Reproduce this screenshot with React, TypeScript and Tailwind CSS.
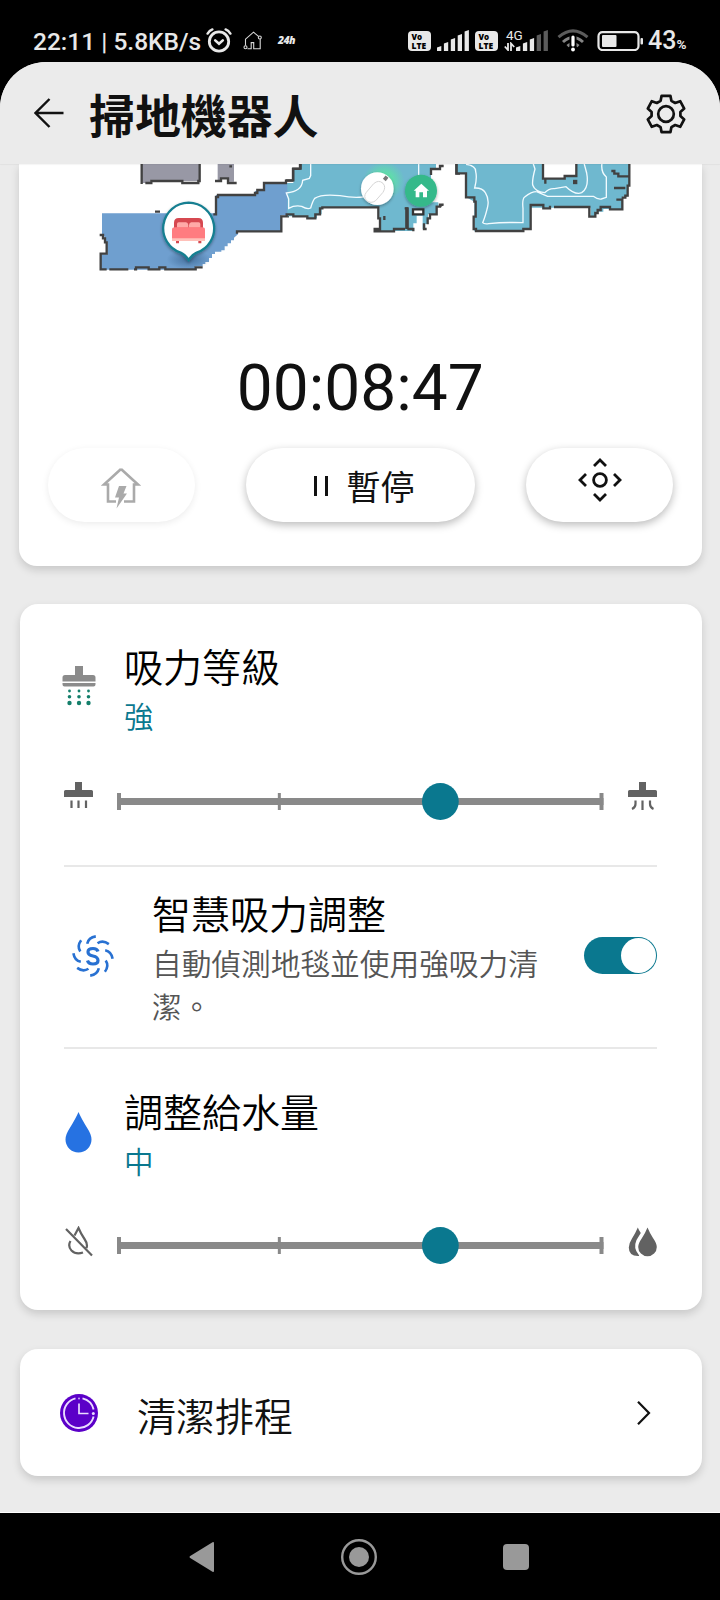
import type { ReactNode } from "react";

const cjk = "font-['Noto_Sans_CJK_TC',sans-serif]";

function VoLte() {
  return (
    <div className="flex h-5 w-[23px] flex-col items-start rounded-[4px] bg-[#e8e8e8] pl-[3.5px] font-['Open_Sans',sans-serif] text-[8px] font-extrabold leading-[9px] text-black">
      <span className="mt-px h-[9px]">Vo</span>
      <span className="h-[9px] text-[8.5px]">LTE</span>
    </div>
  );
}

function Signal({ active }: { active: number }) {
  const heights = [5, 9, 13, 17, 21];
  return (
    <svg className="h-[21px] w-[32px]" viewBox="0 0 32 21">
      {heights.map((h, i) => (
        <path
          key={h}
          d={`M${i * 6.9} 21v-${h - 1.5}l4.300-1.500v${h}z`}
          fill={i < active ? "#e8e8e8" : "#5c5c5c"}
        />
      ))}
    </svg>
  );
}

function StatusBar() {
  return (
    <header className="flex h-[62px] shrink-0 items-center bg-black pl-[33px] pt-[19px] text-[#e8e8e8]">
      <span className="w-[169px] whitespace-nowrap pt-[2px] font-[Roboto,sans-serif] text-[24.5px] font-medium leading-[28px]">
        22:11 | 5.8KB/s
      </span>
      <svg className="ml-[3px] h-[25px] w-[28px]" viewBox="0 0 28 25" fill="none" stroke="#e8e8e8" strokeLinecap="round">
        <circle cx="14" cy="13.5" r="9.7" strokeWidth="2.8" />
        <path d="M2.6 5.6Q4.4 2.6 7.4 1.4M25.4 5.6Q23.6 2.6 20.6 1.4" strokeWidth="2.4" />
        <path d="M10.2 12.4l3.8 3.4 3.8-3.4" strokeWidth="2.6" />
      </svg>
      <svg className="ml-[10px] h-[20px] w-[20px]" viewBox="0 0 20 20" fill="none" stroke="#d8d8d8" strokeWidth="1.1">
        <path d="M2.5 14.5V8.2L10.5 1.2l5 4.2M17.2 8v9.8h-6.5v-6.2H8.2v6.2H4.5" />
        <circle cx="16.8" cy="6.5" r="1.5" />
        <circle cx="2.5" cy="16.3" r="1.5" />
      </svg>
      <span className="ml-[15px] w-[20px] font-['Open_Sans',sans-serif] text-[10.5px] font-extrabold italic leading-none tracking-[-0.6px]">
        24h
      </span>
      <div className="ml-[110px]">
        <VoLte />
      </div>
      <div className="ml-[6px]">
        <Signal active={5} />
      </div>
      <div className="ml-[6px]">
        <VoLte />
      </div>
      <div className="ml-[6px] flex w-[45px] items-end">
        <div className="-mr-[15px] -mt-[3px] flex w-[27px] flex-col">
          <span className="ml-[2px] font-[Roboto,sans-serif] text-[13.5px] leading-[14px]">4G</span>
          <svg className="h-[9px] w-[11px]" viewBox="0 0 11 9" fill="none" stroke="#e8e8e8" strokeWidth="1.8">
            <path d="M.8 4.5L4 8V1M10.2 5L7 1.5V9" />
          </svg>
        </div>
        <Signal active={3} />
      </div>
      <svg className="ml-[8px] h-[23px] w-[32px]" viewBox="0 0 32 23" fill="none">
        <g stroke="#5c5c5c" strokeWidth="3">
          <path d="M1.5 8.2Q16-4.5 30.5 8.2" />
          <path d="M6 13Q16 4 26 13" stroke="#858585" />
          <path d="M10.5 17.2Q16 12 21.5 17.2" stroke="#858585" />
        </g>
        <path d="M12.5 6h7v17h-7z" fill="#000" />
        <path d="M16 8v8" stroke="#fff" strokeWidth="3.2" strokeLinecap="round" />
        <circle cx="16" cy="20.5" r="1.9" fill="#fff" />
      </svg>
      <svg className="ml-[8px] h-5 w-[47px]" viewBox="0 0 47 20">
        <rect x="1.5" y="1.2" width="40" height="17.8" rx="4" fill="none" stroke="#e8e8e8" strokeWidth="2.2" />
        <rect x="5" y="4" width="14.5" height="12" rx="1" fill="#e8e8e8" />
        <rect x="43.5" y="7" width="2.5" height="6.5" rx="1" fill="#e8e8e8" />
      </svg>
      <div className="ml-[4px] flex items-baseline whitespace-nowrap pt-[4px] font-[Roboto,sans-serif] font-medium leading-[28px]">
        <span className="text-[25px]">43</span>
        <span className="text-[13.5px] font-bold">%</span>
      </div>
    </header>
  );
}

function TopBar() {
  return (
    <div className="relative z-10 flex h-[102px] shrink-0 items-center rounded-t-[46px] bg-[#ebebeb] pl-[34px] pr-[34px] shadow-[0_1px_1px_rgba(0,0,0,0.04)]">
      <svg className="h-[30px] w-[30px]" viewBox="0 0 30 30" fill="none" stroke="#111" strokeWidth="2.4">
        <path d="M15.5 1L1.5 15l14 14M1.5 15h28" />
      </svg>
      <h1 className={`ml-[25px] text-[46px] font-bold leading-[60px] tracking-[-0.1px] text-[#111] ${cjk}`}>
        掃地機器人
      </h1>
      <svg className="ml-auto mt-px h-[40px] w-[40px]" viewBox="0 0 40 40" fill="none" stroke="#111" strokeWidth="2.7" strokeLinejoin="round">
        <path d="M15.6 1.8h8.8l1 5 3.8 2.2 5-1.8 4 7.4-3.8 3.4v4l3.8 3.4-4 7.4-5-1.8-3.8 2.2-1 5h-8.8l-1-5-3.8-2.2-5 1.8-4-7.4 3.8-3.4v-4l-3.8-3.4 4-7.4 5 1.8 3.8-2.2z" />
        <circle cx="20" cy="20" r="7.8" />
      </svg>
    </div>
  );
}

function FloorMap() {
  return (
    <svg className="block h-[180px] w-[684px]" viewBox="19 164 684 180" fill="none">
      <defs>
        <radialGradient id="glow">
          <stop offset="0.4" stopColor="#5fe0a8" stopOpacity="0.9" />
          <stop offset="1" stopColor="#5fe0a8" stopOpacity="0" />
        </radialGradient>
        <radialGradient id="shade">
          <stop offset="0.2" stopColor="#1c4670" stopOpacity="0.4" />
          <stop offset="1" stopColor="#1c4670" stopOpacity="0" />
        </radialGradient>
        <filter id="drop" x="-30%" y="-30%" width="160%" height="160%">
          <feDropShadow dx="0" dy="4" stdDeviation="4" floodOpacity="0.35" />
        </filter>
      </defs>

      <g transform="translate(80 155) scale(0.33333)">
        <path d="M185 24h174v54h-52v-3h-96v9h-26z" fill="#9898a5" />
        <path d="M413 24h49v56h-17v-10h-22v8h-10z" fill="#9898a5" />
        <path d="M66 175H408V120H525V108L552 103V84H624V181H604V230H474V238L462 248V256H453V265H443V274H434V286H424V290H405V297H396V309H387V321H376V327H368V334H345V344H61V298H82V262L73 258V243H66z" fill="#6f9fcf" />
        <g stroke="#414141" strokeWidth="7">
          <path d="M185 24V87M196 84H214V78H307V84H355V78H359V24M405 78H423V70H444V84H470M448 34H456" />
          <path d="M225 170H240M400 178H408V126H414V120H525V114H532V105H552V84H618V77H639V42H660V24" />
          <path d="M59 240H69V250H75V262H80V296H62V343H80M88 343H145M162 343H168V337H206V343H238V337H256V343H347V337H368M471 236V229H604V184H627" />
        </g>
      </g>

      <g transform="translate(270 155) scale(0.33333)">
        <path d="M92 24H498V42H483V142H505V155H498V178H474V207H466V222H458V182H440V205H430V228H315V222H328V157H155V178H141V190H112V184H52V84H70V45H92z" fill="#6fb8cf" />
        <ellipse cx="342" cy="77" rx="62" ry="58" fill="url(#glow)" />
        <path d="M122 24V62L118 70 98 76Q96 110 49 114L56 132V160Q74 150 95 154Q112 164 122 159Q128 138 134 130Q155 116 210 122Q250 130 280 126M446 24V66" stroke="#f2fbff" strokeWidth="4" />
        <g stroke="#414141" strokeWidth="7">
          <path d="M92 24V41H70V76H47M50 184V178H70V184H112V190H136V178H150V160H157V157H325V190H330V222H314V229H372V222H405M430 229V222H412M404 160H414M521 33H510V42H483V60M521 149H510V155H500V178H480V190H473V208M462 205V222H470" />
          <path d="M411 157V222" strokeWidth="11" />
          <path d="M343 183V195" />
          <path d="M429 163H460V178H429z" fill="#fff" stroke="#333" />
          <path d="M559 24V56H570" />
        </g>
        <g filter="url(#drop)">
          <circle cx="322" cy="101" r="49" fill="#fff" />
        </g>
        <path d="M289 112L311 86Q326 73 339 85Q349 96 339 112L317 137Q303 147 290 137Q279 125 289 112z" stroke="#d5d5d5" strokeWidth="3" />
        <path d="M343 75L351 65" stroke="#777" strokeWidth="11" />
        <g filter="url(#drop)">
          <circle cx="453" cy="107" r="48" fill="#35b98a" />
        </g>
        <path d="M431 107L454 86L477 107H471V127H459V112H448V127H437V107z" fill="#fff" />
      </g>

      <g transform="translate(440 155) scale(0.33333)">
        <path d="M50 24H568V92H562V125H548V162H490V170H466V186H452V158H272V222H250V229H103V184V140L78 126V55H50z" fill="#6fb8cf" />
        <path d="M309 24H409V66H374V71H309z" fill="#fff" />
        <g stroke="#f2fbff" strokeWidth="4">
          <path d="M78 28Q108 32 107 50Q112 68 104 99Q127 98 136 113Q148 132 143 155Q136 185 128 203Q132 208 146 206Q195 201 249 203V160Q246 132 254 126Q274 110 290 110" />
          <path d="M279 24L285 42Q276 75 278 90Q285 110 314 113Q328 99 344 101L378 95Q405 121 425 113Q448 98 440 54L432 24M290 110Q310 119 323 124L390 124L460 124Q473 134 484 132L499 127V66Q482 52 486 24" />
        </g>
        <g stroke="#414141" strokeWidth="7">
          <path d="M50 24V55H78V127H103V140H107V185H101V222H108V228H250V222H272V150H310V160H330V152M342 156H448V185H466V174H473V165H482V156H510V163H547V134H529M568 24V92H563V122H556V128H545M556 99H522M566 64H535V56H523V48H514M309 24V71H316V86M309 71H374V63H409V24" />
          <path d="M399 81H412" strokeWidth="13" />
        </g>
        <path d="M0 35L8 32M0 154L8 149" stroke="#414141" strokeWidth="6" />
      </g>

      <g transform="translate(80 155) scale(0.33333)">
        <ellipse cx="326" cy="313" rx="66" ry="30" fill="url(#shade)" />
        <g filter="url(#drop)">
          <path d="M326 143a77 77 0 0 1 24 150Q338 298 326 315Q314 298 302 293a77 77 0 0 1 24-150z" fill="#fff" stroke="#177f91" strokeWidth="7" />
        </g>
        <path d="M282 222V203Q282 189 296 189H355Q369 189 369 203V222z" fill="#d64850" />
        <path d="M291 218V207Q291 202 296 202H318Q324 202 325 210V218zM327 218V210Q328 202 334 202H356Q361 202 361 207V218z" fill="#ffaaa8" />
        <path d="M276 252V224Q276 217 285 217H367Q375 217 375 224V252z" fill="#ff7c80" />
        <path d="M276 250H375V258H276z" fill="#ffc1ba" />
        <path d="M288 258H297V265H288zM355 258H364V265H355z" fill="#d64850" />
      </g>
    </svg>
  );
}

function RobotCard() {
  return (
    <section className="ml-[18.5px] h-[402px] w-[683.5px] shrink-0 rounded-b-[18px] bg-white shadow-[0_4px_9px_rgba(0,0,0,0.15)]">
      <FloorMap />
      <div className="mt-[7px] h-[75px] text-center font-[Roboto,sans-serif] text-[64px] leading-[75px] text-[#111]">
        00:08:47
      </div>
      <div className="mt-[22px] flex pl-[29px]">
        <button className="flex h-[74px] w-[147px] items-center justify-center rounded-full bg-white pr-px pt-[5px] shadow-[0_2px_7px_rgba(0,0,0,0.08)]">
          <svg className="h-[42px] w-[40px]" viewBox="0 0 40 42">
            <path d="M20 2L3 17.5h4V34.5h8M20 2l17 15.5h-4V34.5H23" fill="none" stroke="#aaa" strokeWidth="2.6" />
            <path d="M18 19h7.5l-3 7.5h3.5L15.5 41.5l2.500-11h-4z" fill="#aaa" />
          </svg>
        </button>
        <button className={`ml-[51px] flex h-[74px] w-[229px] items-center rounded-full bg-white pl-[68px] text-[34px] text-[#111] shadow-[0_3px_8px_rgba(0,0,0,0.27)] ${cjk}`}>
          <svg className="mt-[2px] h-[20px] w-[14px]" viewBox="0 0 14 20" fill="none" stroke="#111" strokeWidth="3">
            <path d="M1.5 0v20M12.5 0v20" />
          </svg>
          <span className="ml-[19px] pt-[2px] leading-[50px]">暫停</span>
        </button>
        <button className="ml-[51px] flex h-[74px] w-[147px] justify-center rounded-full bg-white pl-px pt-[10px] shadow-[0_3px_8px_rgba(0,0,0,0.27)]">
          <svg className="h-[44px] w-[44px]" viewBox="0 0 44 44" fill="none" stroke="#111" strokeWidth="2.8">
            <circle cx="22" cy="22" r="6.4" />
            <path d="M16 8l6-6 6 6M16 36l6 6 6-6M8 16l-6 6 6 6M36 16l6 6-6 6" />
          </svg>
        </button>
      </div>
    </section>
  );
}

function LevelSlider({ left, right }: { left: ReactNode; right: ReactNode }) {
  return (
    <div className="flex h-[37px]">
      <div className="-mt-[1px] w-[29px]">{left}</div>
      <svg className="ml-[24px] h-[37px] w-[487px]" viewBox="0 0 487 37">
        <path d="M0 15h487v7H0z" fill="#898989" />
        <path d="M0 10h4v17H0zM161 10h3v17h-3zM483 10h4v17h-4z" fill="#898989" />
        <circle cx="323.7" cy="18.5" r="18.4" fill="#0a788f" />
      </svg>
      <div className="-mt-[1px] ml-[24px] w-[29px]">{right}</div>
    </div>
  );
}

function Heading({ title, value }: { title: string; value: string }) {
  return (
    <div className={`flex flex-col ${cjk}`}>
      <h2 className="text-[39px] font-[350] leading-[50px] text-black">{title}</h2>
      <p className="mt-[4px] text-[29.5px] font-[350] leading-[43px] text-[#0a788f]">{value}</p>
    </div>
  );
}

function SettingsCard() {
  return (
    <section className="ml-[20px] mt-[38px] h-[706px] w-[681.5px] shrink-0 rounded-[18px] bg-white pl-[44px] pr-[45px] shadow-[0_4px_9px_rgba(0,0,0,0.15)]">
      <div className="h-[261px] pt-[36px]">
        <div className="flex">
          <svg className="-ml-[2px] mt-[26px] h-[40px] w-[34px]" viewBox="0 0 34 40">
            <path d="M13 0h8v9h10q2.500 0 2.500 2.500v4H.5v-4Q.5 9 3 9h10zM.5 17h33v1.500q0 2-2 2h-29q-2 0-2-2z" fill="#8b8b8b" />
            <g fill="#147f6b">
              <circle cx="7.5" cy="25" r="1.4" />
              <circle cx="17" cy="25" r="1.4" />
              <circle cx="26.5" cy="25" r="1.4" />
              <circle cx="7.5" cy="30.7" r="1.8" />
              <circle cx="17" cy="30.7" r="1.8" />
              <circle cx="26.5" cy="30.7" r="1.8" />
              <circle cx="7.5" cy="37" r="2.2" />
              <circle cx="17" cy="37" r="2.2" />
              <circle cx="26.5" cy="37" r="2.2" />
            </g>
          </svg>
          <div className="ml-[28px]">
            <Heading title="吸力等級" value="強" />
          </div>
        </div>
        <div className="mt-[46px]">
          <LevelSlider
            left={
              <svg className="h-[28px] w-[29px]" viewBox="0 0 29 28" fill="none">
                <path d="M11 0h7v8h9.500q1.500 0 1.500 1.500V15H0V9.500Q0 8 1.500 8H11z" fill="#626262" />
                <path d="M7.5 18.5V26M14.5 18.5V26M22 18.5V26" stroke="#626262" strokeWidth="2.2" />
              </svg>
            }
            right={
              <svg className="h-[28px] w-[29px]" viewBox="0 0 29 28" fill="none">
                <path d="M11 0h7v8h9.500q1.500 0 1.500 1.500V15H0V9.500Q0 8 1.500 8H11z" fill="#626262" />
                <path d="M7.5 18.5V22Q7.5 25.5 4 27M14.5 18.5V28M22 18.5V22Q22 25.5 25.5 27" stroke="#626262" strokeWidth="2.2" />
              </svg>
            }
          />
        </div>
      </div>

      <div className="flex h-[184px] border-y-2 border-[#e8e8e8] pl-[8px]">
        <svg className="mt-[68px] h-[42px] w-[42px]" viewBox="0 0 42 42" fill="none" stroke="#2871d2" strokeWidth="2.6">
          {[0, 45, 90, 135, 180, 225, 270, 315].map((angle) => (
            <path key={angle} transform={`rotate(${angle} 21 21)`} d="M15.2 8.8Q16.5 2.500 23.8 1.4" />
          ))}
          <path d="M26 16.5Q25 13.5 21 13.5Q16 13.5 16 17Q16 20 21 21Q26 22 26 25.500Q26 29 21 29Q16.5 29 15.5 25.5" strokeWidth="3.2" />
        </svg>
        <div className={`ml-[38px] w-[392px] pt-[20px] ${cjk}`}>
          <h2 className="text-[39px] font-[350] leading-[50px] text-black">智慧吸力調整</h2>
          <p className="mt-[4px] text-[29.7px] font-[350] leading-[43px] text-[#555]">自動偵測地毯並使用強吸力清潔。</p>
        </div>
        <button className="ml-auto mt-[70px] flex h-[37px] w-[73px] shrink-0 items-center justify-end rounded-full bg-[#0a788f] pr-px">
          <span className="h-[35px] w-[35px] rounded-full bg-white" />
        </button>
      </div>

      <div className="pt-[36px]">
        <div className="flex">
          <svg className="ml-[1px] mt-[27px] h-[41px] w-[27px]" viewBox="0 0 27 41">
            <path d="M13.5 0Q16 6 22.5 16.5Q26.5 22.5 26.5 27.5A13 13 0 0 1 .5 27.5Q.5 22.5 4.5 16.5Q11 6 13.5 0z" fill="#2672e2" />
          </svg>
          <div className="ml-[32px]">
            <Heading title="調整給水量" value="中" />
          </div>
        </div>
        <div className="mt-[45px]">
          <LevelSlider
            left={
              <svg className="h-[31px] w-[29px]" viewBox="0 0 29 31" fill="none" stroke="#626262" strokeWidth="2.2">
                <path d="M2 3l26 26.5M10.5 9.5L14.5 2Q17 8 20.5 13Q24 18 22.5 22M6.5 15Q3.5 20 7.5 24.500Q12 29 19 26.5" />
              </svg>
            }
            right={
              <svg className="h-[31px] w-[29px]" viewBox="0 0 29 31" fill="#626262">
                <path d="M9.8 1.5Q11 4.5 12.8 7L8.500 14Q5 22 10.5 28.5Q12 30 10 30Q.8 30 .8 21.5Q.8 17.5 4 12.5Q8 6 9.8 1.5z" />
                <path d="M19.5 1.5Q21.5 6.5 25 12Q28.8 17.5 28.8 21A9.300 9.300 0 0 1 10.2 21Q10.2 17.5 14 12Q17.5 6.5 19.5 1.5z" />
              </svg>
            }
          />
        </div>
      </div>
    </section>
  );
}

function ScheduleCard() {
  return (
    <section className="ml-[20px] mt-[39px] flex h-[127px] w-[681.5px] shrink-0 items-center rounded-[18px] bg-white pl-[40px] pr-[51px] shadow-[0_4px_9px_rgba(0,0,0,0.15)]">
      <svg className="h-[38px] w-[38px]" viewBox="0 0 38 38" fill="none">
        <circle cx="19" cy="19" r="19" fill="#5b00c8" />
        <path d="M15.5 4.4A15 15 0 1 0 33.6 22.5M22.5 4.4A15 15 0 0 1 33.6 15.5" stroke="#eadcff" strokeWidth="1.9" />
        <path d="M19 9.5V19.5H28.5" stroke="#eadcff" strokeWidth="1.7" />
        <circle cx="33.3" cy="19.5" r="1.5" fill="#eadcff" />
        <circle cx="19" cy="4.5" r="1" fill="#c9a6f5" />
      </svg>
      <h2 className={`ml-[39px] pt-[3px] text-[39px] font-[350] leading-[50px] text-[#111] ${cjk}`}>清潔排程</h2>
      <svg className="ml-auto mt-px h-[24px] w-[14px]" viewBox="0 0 14 24" fill="none" stroke="#111" strokeWidth="2.2">
        <path d="M1 .8L12 12 1 23.2" />
      </svg>
    </section>
  );
}

function NavBar() {
  return (
    <nav className="flex h-[87px] shrink-0 items-center bg-black pl-[189px]">
      <svg className="h-[32px] w-[25px]" viewBox="0 0 25 32" fill="#999">
        <path d="M23.5 1.3Q25 .5 25 2.3V29.7Q25 31.5 23.5 30.7L1.2 17Q-.2 16 1.2 15z" />
      </svg>
      <svg className="ml-[127px] h-[36px] w-[36px]" viewBox="0 0 36 36">
        <circle cx="18" cy="18" r="16.8" fill="none" stroke="#999" strokeWidth="2.4" />
        <circle cx="18" cy="18" r="10" fill="#999" />
      </svg>
      <span className="ml-[126px] h-[26px] w-[26px] rounded-[4px] bg-[#999]" />
    </nav>
  );
}

export default function App() {
  return (
    <div className="flex h-[1600px] w-[720px] flex-col overflow-hidden bg-black">
      <StatusBar />
      <main className="flex h-[1451px] shrink-0 flex-col rounded-t-[46px] border-b border-white bg-[#ebebeb]">
        <TopBar />
        <RobotCard />
        <SettingsCard />
        <ScheduleCard />
      </main>
      <NavBar />
    </div>
  );
}
